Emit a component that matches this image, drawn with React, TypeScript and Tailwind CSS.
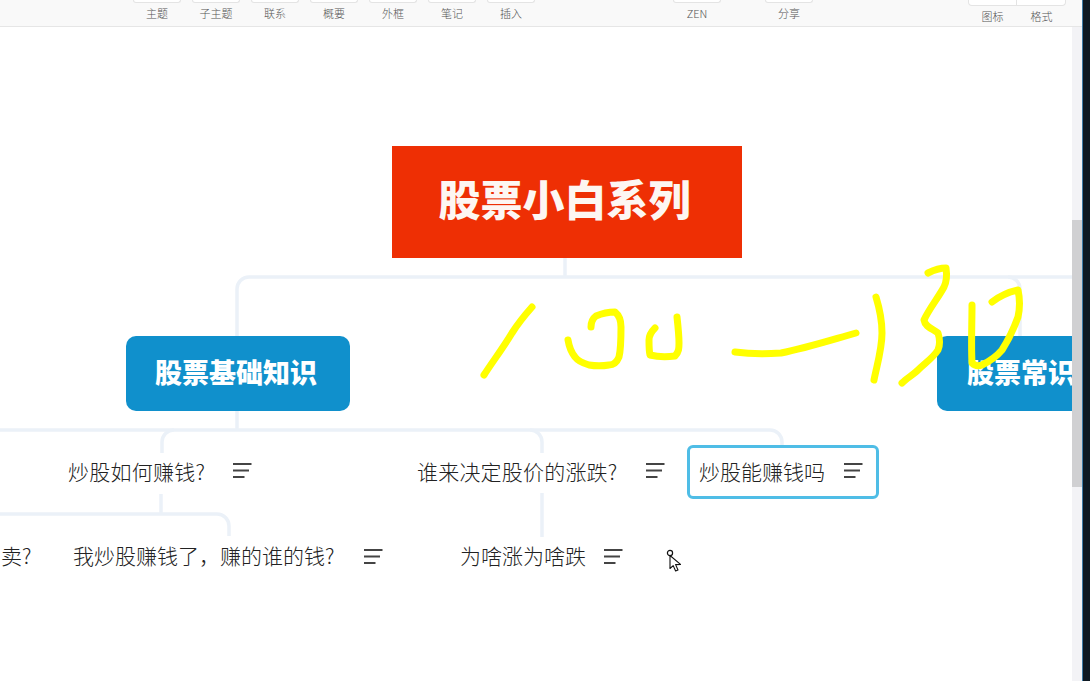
const toolItems = ['主题', '子主题', '联系', '概要', '外框', '笔记', '插入'];

function ToolItem({ label }: { label: string }) {
  return (
    <div className="flex w-12 flex-col items-center">
      <div className="h-[3px] w-full rounded-b-sm border-x border-b border-[#e4e4e4] bg-white" />
      <span className="mt-[2px] text-[11px] leading-[16px] font-light text-[#555]">{label}</span>
    </div>
  );
}

function Toolbar() {
  return (
    <div className="flex h-[27px] shrink-0 border-b border-[#e6e6e6] bg-[#f9f9f9] pl-[133px]">
      <div className="flex gap-[11px]">
        {toolItems.map((t) => (
          <ToolItem key={t} label={t} />
        ))}
      </div>
      <div className="ml-[138px]">
        <ToolItem label="ZEN" />
      </div>
      <div className="ml-[44px]">
        <ToolItem label="分享" />
      </div>
      <div className="ml-[155px] flex">
        <div className="flex w-[49px] flex-col items-center">
          <div className="h-[6px] w-full rounded-bl-sm border-x border-b border-[#e4e4e4] bg-white" />
          <span className="mt-[2px] text-[11px] leading-[16px] font-light text-[#555]">图标</span>
        </div>
        <div className="flex w-[49px] flex-col items-center">
          <div className="h-[6px] w-full rounded-br-sm border-r border-b border-[#e4e4e4] bg-white" />
          <span className="mt-[2px] text-[11px] leading-[16px] font-light text-[#555]">格式</span>
        </div>
      </div>
    </div>
  );
}

function NoteIcon({ className }: { className: string }) {
  return (
    <svg className={className} width="19" height="16" viewBox="0 0 19 16" fill="none" stroke="#444" strokeWidth="2">
      <path d="M0 1h18.5M0 7.5h16M0 14h11.5" />
    </svg>
  );
}

function Connectors() {
  return (
    <svg className="absolute left-0 top-0" width="1072" height="654" viewBox="0 27 1072 654" fill="none" stroke="#ebf1f8" strokeWidth="3.5">
      <path d="M565 258v19" />
      <path d="M1072 277H249a12 12 0 0 0-12 12v47" />
      <path d="M1008 277a12 12 0 0 1 12 12v47" />
      <path d="M237 411v19" />
      <path d="M0 430h770a12 12 0 0 1 12 12v4" />
      <path d="M174 430a12 12 0 0 0-12 12v11" />
      <path d="M530 430a12 12 0 0 1 12 12v11" />
      <path d="M161 494v20" />
      <path d="M0 514h217a12 12 0 0 1 12 12v10" />
      <path d="M542 493v44" />
    </svg>
  );
}

function Scribble() {
  return (
    <svg className="absolute left-0 top-0" width="1072" height="654" viewBox="0 27 1072 654" fill="none" stroke="#ffff00" strokeWidth="7" strokeLinecap="round" strokeLinejoin="round">
      <path d="M532 307C524 316 519 322 512 333C503 348 493 361 484 375" />
      <path d="M591 327C591 322 592 319 596 316C603 313 610 312 615 312C620 316 621 321 621 327C621 338 621 349 619 357C617 362 614 365 609 365C603 366 595 366 589 365C582 363 578 361 575 357C571 352 569 346 568 340" />
      <path d="M655 328C650 333 649 336 649 340C649 346 649 351 650 355C658 357 667 357 675 356C679 352 679 348 679 343C679 335 678 326 677 317" />
      <path d="M735 352C750 354 766 354 781 353C806 348 831 340 856 333" />
      <path d="M876 297C880 310 882 322 882 333C882 349 877 365 874 380" />
      <path d="M928 273C934 270 940 268 946 268C947 275 947 281 944 287C938 298 929 309 924 320C925 327 933 329 938 333C940 339 940 345 938 350C933 358 925 363 918 370C913 375 907 378 902 383" />
      <path d="M972 305C972 324 971 344 972 363C975 366 979 366 982 365C990 361 997 356 1002 350C1009 339 1014 328 1018 317C1020 308 1020 299 1018 290C1009 292 1000 296 992 302" />
    </svg>
  );
}

function Cursor() {
  return (
    <svg className="absolute left-[666px] top-[522px]" width="18" height="24" viewBox="0 0 18 24">
      <circle cx="4" cy="4" r="2.6" fill="#fff" stroke="#111" strokeWidth="1.2" />
      <path d="M4 6.5V19.5L7.2 16.6L9.6 22L12 21L9.6 15.6L14.5 15.4Z" fill="#fff" stroke="#111" strokeWidth="1.1" strokeLinejoin="round" />
    </svg>
  );
}

export default function App() {
  return (
    <div className="flex h-[681px] w-[1090px] overflow-hidden bg-white font-['Noto_Sans_CJK_SC','Noto_Sans',sans-serif]">
      <div className="flex w-[1082px] shrink-0 flex-col">
        <Toolbar />
        <div className="flex min-h-0 flex-1">
          <div className="relative h-[654px] w-[1072px] shrink-0 overflow-hidden bg-white">
            <Connectors />

            <div className="absolute left-[392px] top-[119px] flex h-[112px] w-[350px] items-center justify-center bg-[#ee2f04] pr-[5px] pb-[10px] text-[42px] font-black text-[#fdf6f2]">
              股票小白系列
            </div>

            <div className="absolute left-[126px] top-[309px] flex h-[75px] w-[224px] items-center justify-center rounded-[10px] bg-[#1090cc] pr-[4px] pb-[2px] text-[27px] font-black text-white">
              股票基础知识
            </div>
            <div className="absolute left-[937px] top-[309px] flex h-[75px] w-[135px] items-center rounded-l-[10px] bg-[#1090cc] pb-[2px] pl-[30px] text-[27px] font-black whitespace-nowrap text-white">
              股票常识
            </div>

            <div className="absolute left-[68px] top-[429px] text-[21px] leading-[30px] font-light tracking-[0.25px] whitespace-nowrap text-[#222]">炒股如何赚钱?</div>
            <NoteIcon className="absolute left-[233px] top-[436px]" />

            <div className="absolute left-[417px] top-[429px] text-[21px] leading-[30px] font-light tracking-[0.2px] whitespace-nowrap text-[#222]">谁来决定股价的涨跌?</div>
            <NoteIcon className="absolute left-[646px] top-[436px]" />

            <div className="absolute left-[687px] top-[418px] flex h-[54px] w-[192px] items-center rounded-[6px] border-[3px] border-[#4fbde6] bg-white pl-[9px] text-[21px] font-light whitespace-nowrap text-[#222]">
              炒股能赚钱吗
            </div>
            <NoteIcon className="absolute left-[844px] top-[436px]" />

            <div className="absolute left-[1px] top-[513px] text-[21px] leading-[30px] font-light whitespace-nowrap text-[#222]">卖?</div>
            <div className="absolute left-[73px] top-[513px] text-[21px] leading-[30px] font-light whitespace-nowrap text-[#222]">{'我炒股赚钱了\uFF0C赚的谁的钱?'}</div>
            <NoteIcon className="absolute left-[364px] top-[522px]" />

            <div className="absolute left-[460px] top-[513px] text-[21px] leading-[30px] font-light whitespace-nowrap text-[#222]">为啥涨为啥跌</div>
            <NoteIcon className="absolute left-[604px] top-[522px]" />

            <Scribble />
            <Cursor />
          </div>

          <div className="flex w-[10px] shrink-0 flex-col bg-[#f3f3f6]">
            <div className="mt-[193px] h-[267px] bg-[#d0d0d2]" />
          </div>
        </div>
      </div>
      <div className="h-[681px] w-px shrink-0 bg-[#3d7ba6]" />
      <div className="h-[681px] w-[7px] shrink-0 bg-[#0e1922]" />
    </div>
  );
}
